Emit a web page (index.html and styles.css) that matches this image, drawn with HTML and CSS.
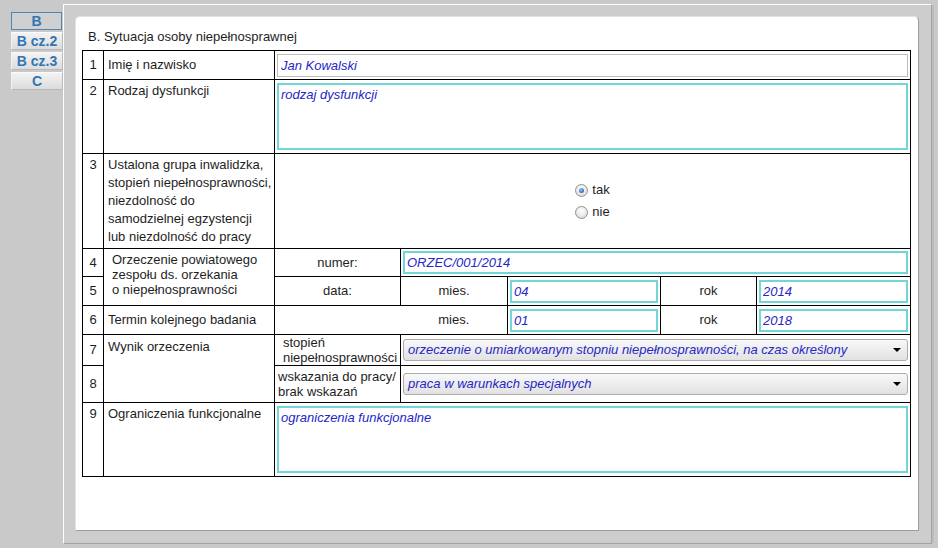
FILE: index.html
```html
<!DOCTYPE html>
<html lang="pl">
<head>
<meta charset="utf-8">
<title>B. Sytuacja osoby niepełnosprawnej</title>
<link rel="stylesheet" href="styles.css">
</head>
<body>
<div class="app">
  <nav class="tabs">
    <div class="tab active">B</div>
    <div class="tab">B cz.2</div>
    <div class="tab">B cz.3</div>
    <div class="tab">C</div>
  </nav>
  <div class="panel">
    <div class="card">
      <div class="title">B. Sytuacja osoby niepełnosprawnej</div>
      <table class="form">
        <colgroup>
          <col class="c1"><col class="c2"><col class="c3"><col class="c4"><col class="c5"><col class="c6"><col class="c7">
        </colgroup>
        <tr class="r1">
          <td class="num mid">1</td>
          <td class="lbl mid">Imię i nazwisko</td>
          <td class="ctl" colspan="5"><input class="fld plain" type="text" value="Jan Kowalski"></td>
        </tr>
        <tr class="r2">
          <td class="num">2</td>
          <td class="lbl">Rodzaj dysfunkcji</td>
          <td class="ctl" colspan="5"><textarea class="area">rodzaj dysfunkcji</textarea></td>
        </tr>
        <tr class="r3">
          <td class="num">3</td>
          <td class="lbl tall">Ustalona grupa inwalidzka, stopień niepełnosprawności, niezdolność do samodzielnej egzystencji lub niezdolność do pracy</td>
          <td class="radios" colspan="5">
            <div class="radio-group">
              <label class="opt"><span class="radio on"></span>tak</label>
              <label class="opt"><span class="radio"></span>nie</label>
            </div>
          </td>
        </tr>
        <tr class="r4">
          <td class="num mid">4</td>
          <td class="lbl orz" rowspan="2">Orzeczenie powiatowego<br>zespołu ds. orzekania<br>o niepełnosprawności</td>
          <td class="cap">numer:</td>
          <td class="ctl" colspan="4"><input class="fld" type="text" value="ORZEC/001/2014"></td>
        </tr>
        <tr class="r5">
          <td class="num mid">5</td>
          <td class="cap">data:</td>
          <td class="cap">mies.</td>
          <td class="ctl"><input class="fld" type="text" value="04"></td>
          <td class="cap">rok</td>
          <td class="ctl"><input class="fld" type="text" value="2014"></td>
        </tr>
        <tr class="r6">
          <td class="num mid">6</td>
          <td class="lbl mid">Termin kolejnego badania</td>
          <td class="cap no-right"></td>
          <td class="cap no-left">mies.</td>
          <td class="ctl"><input class="fld" type="text" value="01"></td>
          <td class="cap">rok</td>
          <td class="ctl"><input class="fld" type="text" value="2018"></td>
        </tr>
        <tr class="r7">
          <td class="num mid">7</td>
          <td class="lbl wyn" rowspan="2">Wynik orzeczenia</td>
          <td class="sub indent">stopień<br>niepełnosprawności</td>
          <td class="ctl" colspan="4">
            <div class="sel"><span>orzeczenie o umiarkowanym stopniu niepełnosprawności, na czas określony</span><svg class="arrow" width="8" height="4" viewBox="0 0 8 4"><path d="M0 0H8L4 4Z" fill="#000"/></svg></div>
          </td>
        </tr>
        <tr class="r8">
          <td class="num mid">8</td>
          <td class="sub">wskazania do pracy/<br>brak wskazań</td>
          <td class="ctl" colspan="4">
            <div class="sel"><span>praca w warunkach specjalnych</span><svg class="arrow" width="8" height="4" viewBox="0 0 8 4"><path d="M0 0H8L4 4Z" fill="#000"/></svg></div>
          </td>
        </tr>
        <tr class="r9">
          <td class="num">9</td>
          <td class="lbl">Ograniczenia funkcjonalne</td>
          <td class="ctl" colspan="5"><textarea class="area">ograniczenia funkcjonalne</textarea></td>
        </tr>
      </table>
    </div>
  </div>
</div>
</body>
</html>
```

FILE: styles.css
```css
html, body {
  margin: 0;
  padding: 0;
}
body {
  background: #c9c9c9;
  font-family: "Liberation Sans", Arial, sans-serif;
  font-size: 13px;
  color: #1e1e1e;
  width: 938px;
  height: 548px;
  overflow: hidden;
}
.app {
  display: flex;
  height: 548px;
}
.tabs {
  flex: 0 0 63px;
  box-sizing: border-box;
  padding: 12px 0 0 11px;
  display: flex;
  flex-direction: column;
  gap: 2px;
}
.tab {
  height: 18px;
  box-sizing: border-box;
  font-weight: bold;
  font-size: 14px;
  line-height: 16px;
  color: #3374b2;
  text-align: center;
  background: linear-gradient(#f3f3f3, #dcdcdc);
  border: 1px solid #b8b8b8;
  border-top-color: #fbfbfb;
  border-left-color: #f4f4f4;
}
.tab.active {
  background: #d0d0d0;
  border: 1px solid #4e88b2;
  margin-right: 1px;
}
.panel {
  flex: 1;
  margin: 4px 7px 4px 0;
  border: 1px solid;
  border-color: #fdfdfd #a2a2a2 #a2a2a2 #fdfdfd;
  background: #cdcdcd;
  padding: 11px 12px 12px 11px;
  display: flex;
  box-shadow: 3px 0 0 -1px #bdbdbd;
}
.card {
  flex: 1;
  background: #fff;
  border: 1px solid;
  border-color: #e2e2e2 #9d9d9d #9d9d9d #e2e2e2;
  border-radius: 5px 5px 0 0;
  padding: 0 7px 0 6px;
}
.title {
  margin-top: 12px;
  padding-left: 6px;
  line-height: 15px;
  height: 15px;
  margin-bottom: 6px;
}
.form {
  border-collapse: collapse;
  table-layout: fixed;
  width: 828px;
}
.c1 { width: 21px; }
.c2 { width: 171px; }
.c3 { width: 126px; }
.c4 { width: 107px; }
.c5 { width: 153px; }
.c6 { width: 96px; }
.c7 { width: 154px; }
.form td {
  border: 1px solid #000;
  padding: 0;
  vertical-align: top;
  line-height: 18px;
}
.form td.mid { vertical-align: middle; }
tr.r1 { height: 29px; }
tr.r2 { height: 74px; }
tr.r3 { height: 95px; }
tr.r4 { height: 28px; }
tr.r5 { height: 29px; }
tr.r6 { height: 29px; }
tr.r7 { height: 31px; }
tr.r8 { height: 37px; }
tr.r9 { height: 74px; }
.form td.num {
  text-align: center;
  padding-top: 2px;
}
.form td.num.mid { padding-top: 0; }
.form td.lbl {
  padding: 2px 2px 0 4px;
}
.form td.lbl.mid { padding-top: 0; }
.form td.lbl.tall { vertical-align: middle; padding-top: 0; }
.form td.lbl.orz {
  line-height: 15px;
  padding: 3px 2px 0 8px;
}
.form td.lbl.wyn {
  line-height: 15px;
  padding: 4px 2px 0 4px;
}
.form td.cap {
  text-align: center;
  vertical-align: middle;
}
.form td.no-right { border-right: none; }
.form td.no-left { border-left: none; }
.form td.sub {
  vertical-align: middle;
  line-height: 15px;
  padding-left: 3px;
  white-space: nowrap;
}
.form td.sub.indent { padding-left: 8px; }
.form td.ctl {
  vertical-align: middle;
  padding: 0 2px 0 2px;
}
.fld {
  display: block;
  box-sizing: border-box;
  width: 100%;
  height: 23px;
  margin: 0;
  border: 2px solid #72d6d6;
  background: #fff;
  font-family: "Liberation Sans", Arial, sans-serif;
  font-size: 13px;
  font-style: italic;
  color: #2626c6;
  padding: 0 0 0 2px;
  outline: none;
}
.fld.plain {
  border: 1px solid #bdbdbd;
  padding-left: 3px;
}
.area {
  display: block;
  box-sizing: border-box;
  width: 100%;
  height: 67px;
  margin: 0;
  border: 2px solid #72d6d6;
  background: #fff;
  font-family: "Liberation Sans", Arial, sans-serif;
  font-size: 13px;
  font-style: italic;
  color: #2626c6;
  line-height: 15px;
  padding: 2px 2px;
  resize: none;
  overflow: hidden;
  outline: none;
}
.form td.radios {
  vertical-align: middle;
}
.radio-group {
  display: flex;
  flex-direction: column;
  align-items: center;
}
.opt {
  display: flex;
  align-items: center;
  gap: 4px;
  height: 22px;
  font-size: 13px;
  color: #1e1e1e;
}
.radio {
  display: block;
  width: 13px;
  height: 13px;
  box-sizing: border-box;
  border-radius: 50%;
  border: 1px solid #929292;
  background: radial-gradient(circle at 50% 35%, #ffffff 0%, #e9e9e9 55%, #cfcfcf 100%);
}
.radio.on::after {
  content: "";
  display: block;
  width: 5px;
  height: 5px;
  margin: 3px;
  border-radius: 50%;
  background: radial-gradient(circle at 40% 35%, #9ccaf2 0%, #3a7ccc 55%, #1b4f97 100%);
}
.sel {
  display: flex;
  align-items: center;
  justify-content: space-between;
  box-sizing: border-box;
  height: 22px;
  border: 1px solid #acacac;
  border-radius: 3px;
  background: linear-gradient(#f8f8f8, #e2e2e2);
  padding: 0 6px 0 4px;
  font-style: italic;
  color: #2626c6;
  line-height: 18px;
  white-space: nowrap;
}
.arrow {
  flex: 0 0 auto;
}
```
